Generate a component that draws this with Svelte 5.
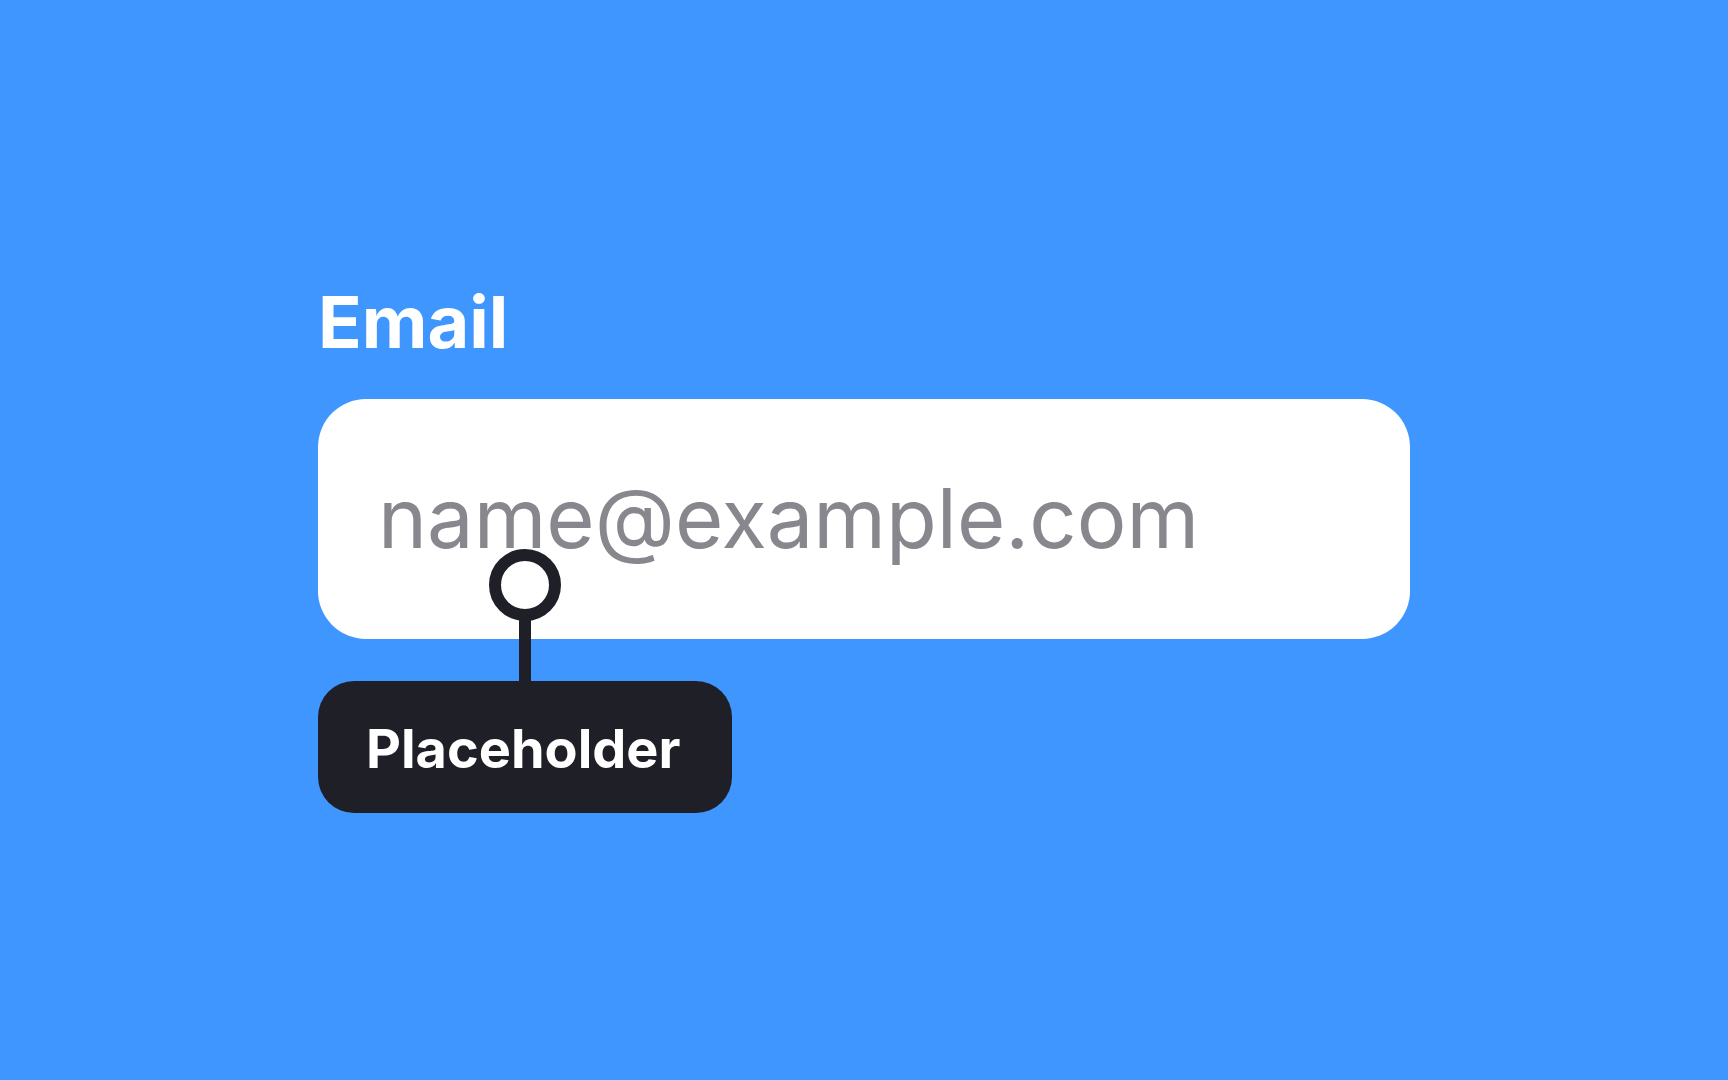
<script>
  let email = $state('');
</script>

<main class="page">
  <form class="field">
    <label class="label" for="email">Email</label>
    <div class="control">
      <input id="email" class="input" type="email" placeholder="name@example.com" autocomplete="off" bind:value={email} />
      <div class="pin" aria-hidden="true">
        <span class="pin-ring"></span>
        <span class="pin-stem"></span>
      </div>
    </div>
    <div class="callout">Placeholder</div>
  </form>
</main>

<style>
  :global(body) {
    margin: 0;
    background: #3f96ff;
  }
  .page {
    min-height: 100vh;
    box-sizing: border-box;
    padding: 12px 24px 0;
    display: flex;
    align-items: center;
    justify-content: center;
    background: #3f96ff;
    font-family: Inter, 'Liberation Sans', sans-serif;
  }
  .field {
    width: 100%;
    max-width: 1092px;
    display: flex;
    flex-direction: column;
    align-items: flex-start;
  }
  .label {
    margin-bottom: 34px;
    color: #fff;
    font-size: 72px;
    font-weight: 700;
    line-height: 86px;
  }
  .control {
    position: relative;
    width: 100%;
    margin-bottom: 42px;
  }
  .input {
    display: block;
    box-sizing: border-box;
    width: 100%;
    height: 240px;
    padding: 0 60px 2px;
    border: none;
    border-radius: 48px;
    background: #fff;
    color: #1f1f28;
    font-family: inherit;
    font-size: 83px;
    font-weight: 400;
  }
  .input::placeholder { color: #87878d; opacity: 1; }
  .input:focus { outline: none; }

  /* marker that ties the callout to the hint text */
  .pin {
    position: absolute;
    top: 150px;
    left: 171px;
    bottom: -44px;
    display: flex;
    flex-direction: column;
    align-items: center;
    pointer-events: none;
  }
  .pin-ring {
    box-sizing: border-box;
    width: 72px;
    height: 72px;
    border: 12px solid #1f1f28;
    border-radius: 50%;
    background: #fff;
  }
  .pin-stem {
    flex: 1;
    width: 12px;
    margin-top: -2px;
    background: #1f1f28;
  }

  .callout {
    padding: 34px 52px 30px 48px;
    border-radius: 36px;
    background: #1f1f28;
    color: #fff;
    font-size: 54px;
    font-weight: 700;
    line-height: 68px;
  }
</style>
